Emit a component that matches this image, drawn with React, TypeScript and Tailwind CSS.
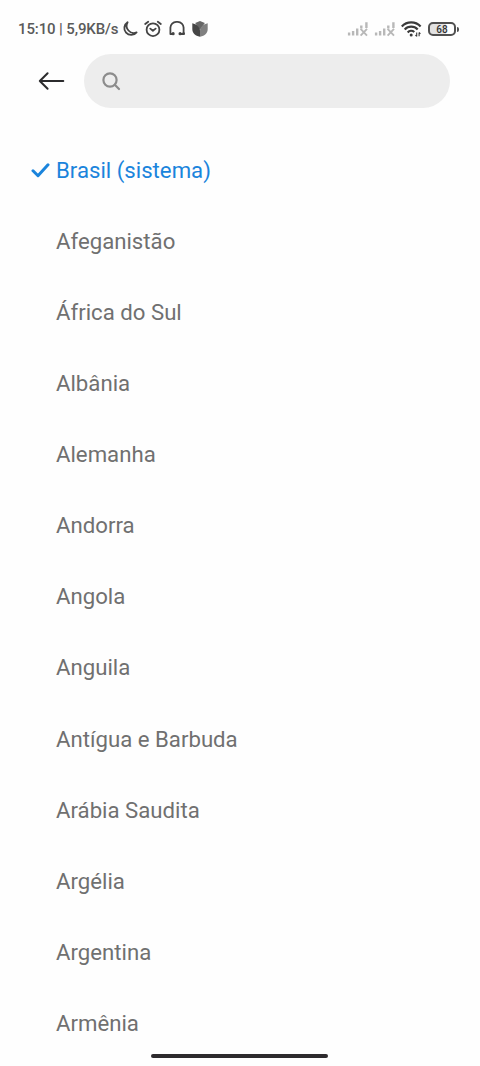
const regions = [
  'Brasil (sistema)',
  'Afeganistão',
  'África do Sul',
  'Albânia',
  'Alemanha',
  'Andorra',
  'Angola',
  'Anguila',
  'Antígua e Barbuda',
  'Arábia Saudita',
  'Argélia',
  'Argentina',
  'Armênia',
]

function MoonIcon() {
  return (
    <svg width="16" height="16" viewBox="0 0 16 16" fill="none" stroke="#444" strokeWidth="1.8" strokeLinejoin="round">
      <path d="M5.6 1.2A6.9 6.9 0 1 0 14.6 11.4A7.2 7.2 0 0 1 5.6 1.2Z" />
    </svg>
  )
}

function AlarmIcon() {
  return (
    <svg width="18" height="18" viewBox="0 0 18 18" fill="none" stroke="#444" strokeWidth="1.8" strokeLinecap="round" strokeLinejoin="round">
      <circle cx="9" cy="9.7" r="6.4" />
      <path d="M1.2 4L4.2 1.7M16.8 4L13.8 1.7M6.3 8.6L8.9 10.8L11.6 8.6" />
    </svg>
  )
}

function HeadphonesIcon() {
  return (
    <svg width="18" height="18" viewBox="0 0 18 18" fill="none" stroke="#444" strokeWidth="1.8" strokeLinejoin="round">
      <path d="M5 14H2.4V7.6A6 6 0 0 1 8.2 1.8H9.8A6 6 0 0 1 15.6 7.6V14H12.4" />
      <circle cx="5.1" cy="13.7" r="1.6" fill="#444" stroke="none" />
      <circle cx="12.1" cy="13.7" r="1.6" fill="#444" stroke="none" />
      <circle cx="15.6" cy="13.7" r="1.4" fill="#444" stroke="none" />
    </svg>
  )
}

function TulipIcon() {
  return (
    <svg width="16" height="18" viewBox="0 0 16 18">
      <path d="M3.2 3L8 1L12.8 3L8 10Z" fill="#666" />
      <path d="M0.3 3.2C4.5 4 7.5 6.5 8 10.5V16.8C3 15.7 0.3 13 0.3 9Z" fill="#454545" />
      <path d="M15.7 3.2C11.5 4 8.5 6.5 8 10.5V16.8C13 15.7 15.7 13 15.7 9Z" fill="#808080" />
    </svg>
  )
}

function NoSignalIcon() {
  return (
    <svg width="23" height="18" viewBox="0 0 23 18" fill="none" stroke="#b8b8b8" strokeWidth="2.4">
      <path d="M2.1 12.6V15.4M6.1 11V15.4M10.2 8.6V15.4M14.3 5.4V8.6M19.4 2.2V8" />
      <path d="M13.6 8.8L20 15.6M20 8.8L13.6 15.6" strokeWidth="1.9" />
    </svg>
  )
}

function WifiIcon() {
  return (
    <svg width="21" height="18" viewBox="0 0 21 18" fill="none" stroke="#3a3a3a" strokeWidth="2.2">
      <path d="M0.8 6.4A13 13 0 0 1 19.6 6.4M3.7 9.5A9 9 0 0 1 16.7 9.5M6.7 12.4A4.8 4.8 0 0 1 13.3 12" />
      <circle cx="10.2" cy="15" r="1.5" fill="#3a3a3a" stroke="none" />
      <path d="M15.7 12.6V16.4M18.1 12.4V16.2M14.4 15L15.7 16.4M18.1 12.4L19.4 13.8" strokeWidth="1.1" />
    </svg>
  )
}

function Battery({ level }: { level: number }) {
  return (
    <div className="flex items-center">
      <div className="flex h-[14px] w-[28px] items-center justify-center rounded-[5px] border-2 border-[#505050] bg-[linear-gradient(90deg,#e2e2e2_68%,#fff_68%)]">
        <span className="text-[10px] leading-[11px] font-medium text-[#333]">{level}</span>
      </div>
      <div className="ml-px h-[5px] w-[2px] rounded-r-full bg-[#505050]" />
    </div>
  )
}

function StatusBar() {
  return (
    <div className="flex h-[54px] items-center justify-between pt-[4px] pr-[21px] pl-[18px]">
      <div className="flex items-center">
        <span className="w-[104px] text-[15px] leading-[18px] font-medium tracking-[-0.12px] whitespace-nowrap text-[#5a5a5a]">15:10 | 5,9KB/s</span>
        <MoonIcon />
        <div className="ml-[6px] flex items-center gap-[6px]">
          <AlarmIcon />
          <HeadphonesIcon />
          <TulipIcon />
        </div>
      </div>
      <div className="flex items-center">
        <NoSignalIcon />
        <div className="ml-[4px]"><NoSignalIcon /></div>
        <div className="mr-[6px] ml-[4px]"><WifiIcon /></div>
        <Battery level={68} />
      </div>
    </div>
  )
}

function SearchHeader() {
  return (
    <header className="flex h-[54px] items-center pr-[30px] pl-[38px]">
      <button aria-label="Voltar" className="mr-[19px]">
        <svg width="27" height="20" viewBox="0 0 27 20" fill="none" stroke="#2b2b2d" strokeWidth="2" strokeLinecap="round" strokeLinejoin="round">
          <path d="M25.3 10H1.8M9.6 2.2L1.8 10L9.6 17.8" />
        </svg>
      </button>
      <div className="flex h-[54px] flex-1 items-center rounded-full bg-[#ededed] pl-[17px]">
        <svg width="21" height="21" viewBox="0 0 21 21" fill="none" stroke="#8c8c8c" strokeWidth="2.2" strokeLinecap="round">
          <circle cx="9" cy="9" r="6.6" />
          <path d="M13.8 13.8L18 18" />
        </svg>
      </div>
    </header>
  )
}

export default function App() {
  return (
    <div className="flex h-[1066px] w-[480px] flex-col overflow-hidden bg-[#fefefe] font-['Roboto',sans-serif]">
      <StatusBar />
      <SearchHeader />

      <ul className="mt-[27px]">
        {regions.map((name, i) => (
          <li key={name} className={`flex h-[71.08px] items-center pl-[31px] text-[22.2px] ${i === 0 ? 'text-[#1a84dc]' : 'text-[#707070]'}`}>
            <div className="w-[25px]">
              {i === 0 && (
                <svg width="19" height="16" viewBox="0 0 19 16" fill="none" stroke="currentColor" strokeWidth="3" strokeLinecap="round" strokeLinejoin="round">
                  <path d="M2 7.8L7 12.7L17 1.8" />
                </svg>
              )}
            </div>
            <span>{name}</span>
          </li>
        ))}
      </ul>

      {/* Gesture bar */}
      <div className="absolute top-[1054px] left-[151px] h-[4px] w-[177px] rounded-full bg-[#2d2a2d]" />
    </div>
  )
}
